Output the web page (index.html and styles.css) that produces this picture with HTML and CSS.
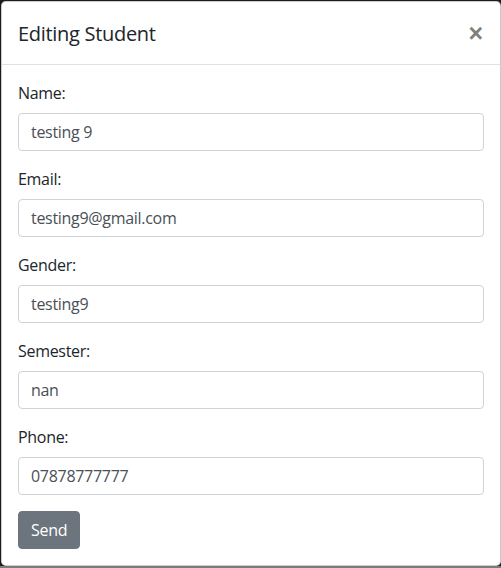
FILE: index.html
```html
<!DOCTYPE html>
<html lang="en">
<head>
<meta charset="utf-8">
<title>Editing Student</title>
<link rel="stylesheet" href="styles.css">
</head>
<body>
<div class="backdrop">
  <div class="modal-content">
    <div class="modal-header">
      <h5 class="modal-title">Editing Student</h5>
      <button type="button" class="close" aria-label="Close">&times;</button>
    </div>
    <form class="modal-body">
      <div class="form-group">
        <label class="form-label">Name:</label>
        <input class="form-control" type="text" value="testing 9">
      </div>
      <div class="form-group">
        <label class="form-label">Email:</label>
        <input class="form-control" type="text" value="testing9@gmail.com">
      </div>
      <div class="form-group">
        <label class="form-label">Gender:</label>
        <input class="form-control" type="text" value="testing9">
      </div>
      <div class="form-group">
        <label class="form-label">Semester:</label>
        <input class="form-control" type="text" value="nan">
      </div>
      <div class="form-group">
        <label class="form-label">Phone:</label>
        <input class="form-control" type="text" value="07878777777">
      </div>
      <button type="button" class="btn btn-secondary">Send</button>
    </form>
  </div>
</div>
</body>
</html>
```
FILE: styles.css
```css
* { box-sizing: border-box; }
html, body {
  margin: 0;
  height: 568px;
  overflow: hidden;
}
body {
  background: linear-gradient(#1c1c1c 0, #1c1c1c 566px, #7b7b7b 566px);
  font-family: "Open Sans", "Noto Sans", sans-serif;
  font-size: 16px;
  line-height: 1.5;
  color: #212529;
  letter-spacing: -0.3px;
}
.backdrop {
  padding: 1px 0 0 1px;
}
.modal-content {
  width: 500px;
  background: #fff;
  border: 1px solid rgba(0, 0, 0, 0.2);
  border-radius: 4.8px;
  display: flex;
  flex-direction: column;
}
.modal-header {
  display: flex;
  align-items: flex-start;
  justify-content: space-between;
  padding: 16px;
  border-bottom: 1px solid #dee2e6;
}
.modal-title {
  margin: 0;
  font-size: 20px;
  font-weight: 500;
  line-height: 1.5;
  color: #212529;
  padding-top: 1px;
  margin-bottom: -1px;
}
.close {
  margin: -16px -16px -16px auto;
  padding: 19px 17px 13px 15px;
  background: transparent;
  border: 0;
  font-family: "Liberation Sans", Arial, sans-serif;
  font-size: 25px;
  font-weight: 700;
  line-height: 1;
  color: #000;
  opacity: 0.5;
  text-shadow: 0 1px 0 #fff;
  cursor: pointer;
}
.modal-body {
  padding: 16px;
  margin: 0;
  display: flex;
  flex-direction: column;
  align-items: flex-start;
}
.form-group {
  width: 100%;
  margin-bottom: 16px;
}
.form-label {
  display: inline-block;
  margin-bottom: 8px;
}
.form-control {
  display: block;
  width: 100%;
  height: 38px;
  padding: 6px 12px;
  font-family: inherit;
  font-size: 16px;
  letter-spacing: -0.3px;
  line-height: 1.5;
  color: #495057;
  background: #fff;
  border: 1px solid #ced4da;
  border-radius: 4px;
}
.btn {
  display: inline-block;
  padding: 6px 12px;
  font-family: inherit;
  font-size: 16px;
  letter-spacing: -0.3px;
  line-height: 1.5;
  border: 1px solid transparent;
  border-radius: 4px;
}
.btn-secondary {
  color: #fff;
  background: #6c757d;
  border-color: #6c757d;
}
```
